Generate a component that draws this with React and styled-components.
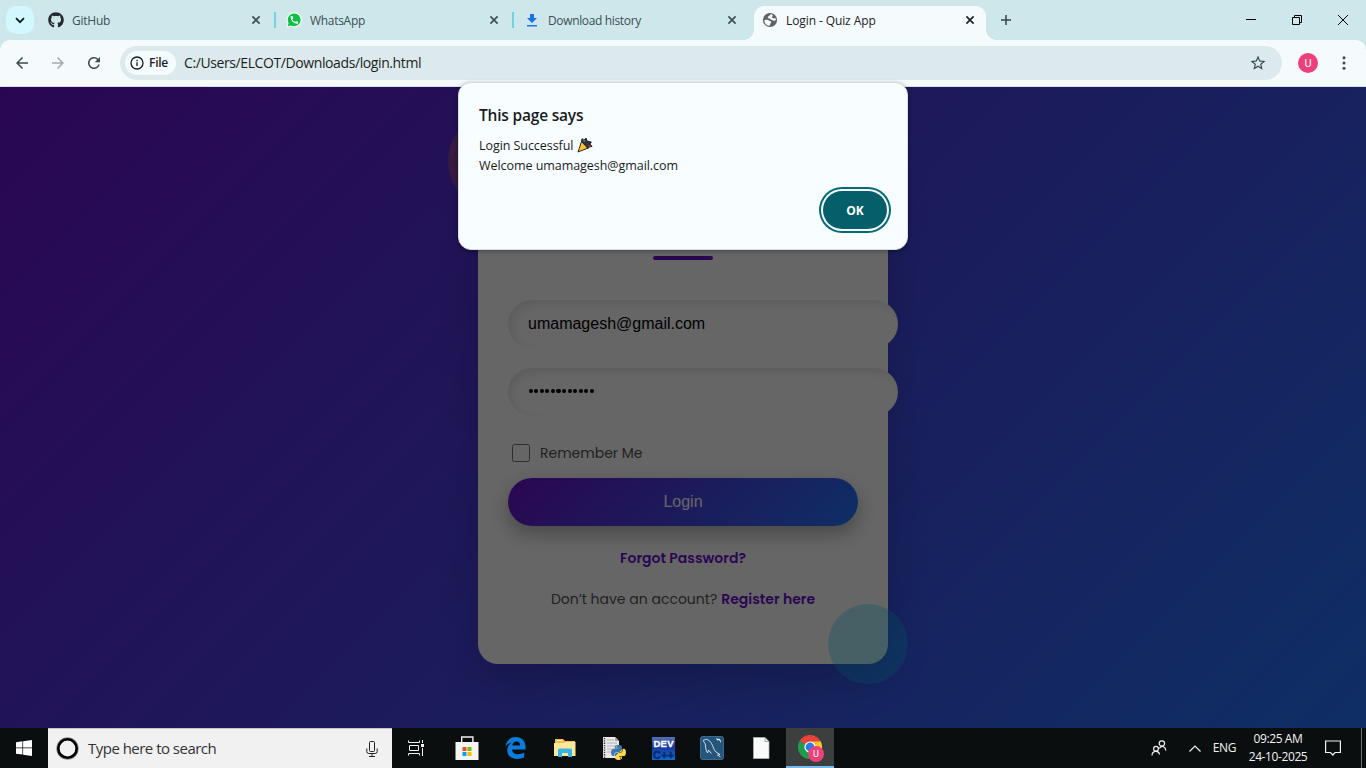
import React from "react";
import styled, { createGlobalStyle, css } from "styled-components";
import { FaGithub, FaPython } from "react-icons/fa";
import { MdStarBorder, MdRefresh, MdArrowBack, MdArrowForward, MdCall } from "react-icons/md";

const ui = '"Open Sans", "Noto Sans", sans-serif';

const GlobalStyle = createGlobalStyle`
  * { box-sizing: border-box; }
  body { margin: 0; overflow: hidden; font-family: ${ui}; }
  svg { display: block; flex: none; }
`;

const Screen = styled.div`
  position: relative;
  display: flex;
  flex-direction: column;
  width: 1366px;
  height: 768px;
  overflow: hidden;
`;

const Label = styled.span`
  font-size: ${(p) => p.$size}px;
  font-weight: ${(p) => p.$weight || 400};
  letter-spacing: ${(p) => p.$track || 0}px;
  color: ${(p) => p.$color || "inherit"};
  line-height: 1.2;
  white-space: nowrap;
`;

/* ---------- Tab strip ---------- */
const TabStrip = styled.div`
  display: flex;
  height: 40px;
  flex: none;
  background: #cee7eb;
`;
const TabSearch = styled.div`
  display: grid;
  place-items: center;
  width: 28px;
  height: 28px;
  margin: 6px 2px 0 6px;
  border-radius: 10px;
  background: #d2f7ff;
`;
const Tab = styled.div`
  position: relative;
  display: flex;
  align-items: center;
  width: ${(p) => p.$width || 238}px;
  padding: 0 13px 0 ${(p) => p.$lead}px;
  gap: ${(p) => p.$gap || 8}px;
  color: #3c4f54;
  ${(p) =>
    p.$active &&
    css`
      margin: 6px 0 0 4px;
      height: 34px;
      padding-right: 11px;
      padding-bottom: 6px;
      border-radius: 10px 10px 0 0;
      background: #f5fafd;
      color: #1d2426;
      &::before,
      &::after {
        content: "";
        position: absolute;
        bottom: 0;
        width: 10px;
        height: 10px;
      }
      &::before {
        left: -10px;
        background: radial-gradient(circle at 0 0, transparent 9.5px, #f5fafd 10px);
      }
      &::after {
        right: -10px;
        background: radial-gradient(circle at 100% 0, transparent 9.5px, #f5fafd 10px);
      }
    `}
`;
const TabTitle = styled(Label)`
  flex: 1;
  padding-top: 2px;
`;
const Divider = styled.div`
  width: 2px;
  height: 16px;
  margin-top: 12px;
  background: #72d3e4;
`;
const NewTab = styled.div`
  display: grid;
  place-items: center;
  width: 40px;
  height: 40px;
`;
const WindowButtons = styled.div`
  display: flex;
  margin-left: auto;
`;
const WindowButton = styled.div`
  display: grid;
  place-items: center;
  width: 46px;
  height: 40px;
`;

/* ---------- Toolbar ---------- */
const ToolbarBack = styled.div`
  flex: none;
  height: 47px;
  background: #cee7eb;
`;
const Toolbar = styled.div`
  display: flex;
  align-items: center;
  height: 47px;
  padding: 0 13px 0;
  border-radius: 10px 10px 0 0;
  border-bottom: 1px solid #d7e0e3;
  background: #f5fafd;
`;
const NavButton = styled.div`
  display: grid;
  place-items: center;
  width: 18px;
  height: 18px;
  margin-right: 18px;
  color: ${(p) => (p.$muted ? "#a3abae" : "#3a4a4e")};
`;
const AddressBar = styled.div`
  display: flex;
  align-items: center;
  width: 1162px;
  height: 34px;
  margin-left: -1px;
  padding: 0 15px 0 5px;
  border-radius: 17px;
  background: #dceaee;
`;
const FileChip = styled.div`
  display: flex;
  align-items: center;
  gap: 5px;
  width: 51px;
  height: 24px;
  padding-left: 5px;
  border-radius: 12px;
  margin-right: 8px;
  background: #f5fafd;
  color: #171d1e;
`;
const Address = styled(Label)`
  flex: 1;
`;
const Avatar = styled.div`
  display: grid;
  place-items: center;
  width: ${(p) => p.$size}px;
  height: ${(p) => p.$size}px;
  border-radius: 50%;
  background: #ec407a;
  color: #fff;
  font: 400 ${(p) => p.$font}px Roboto, sans-serif;
`;
const ToolbarEnd = styled.div`
  display: flex;
  align-items: center;
  gap: 24px;
  margin-left: 16px;
`;

/* ---------- Page ---------- */
const Page = styled.main`
  position: relative;
  display: flex;
  justify-content: center;
  align-items: center;
  height: 641px;
  flex: none;
  background: linear-gradient(135deg, #6a11cb, #2575fc);
`;
const Shade = styled.div`
  position: absolute;
  inset: 0;
  background: rgba(0, 0, 0, 0.6);
`;
const Card = styled.section`
  position: relative;
  display: flex;
  flex-direction: column;
  width: 410px;
  height: 513px;
  padding: 105px 30px 0;
  border-radius: 20px;
  background: #fff;
  box-shadow: 0 15px 40px rgba(0, 0, 0, 0.2);
  color: #555;
`;
const Bubble = styled.div`
  position: absolute;
  border-radius: 50%;
  ${(p) =>
    p.$warm
      ? "left: -30px; top: -40px; width: 100px; height: 100px; background: rgba(255, 126, 29, 0.3);"
      : "right: -20px; bottom: -20px; width: 80px; height: 80px; background: rgba(0, 210, 255, 0.3);"}
`;
const Underline = styled.div`
  align-self: center;
  width: 60px;
  height: 4px;
  margin-bottom: 40px;
  border-radius: 2px;
  background: #6a11cb;
`;
const Field = styled.div`
  display: flex;
  align-items: center;
  width: 390px;
  height: 48px;
  margin-bottom: 20px;
  padding: 0 20px;
  border-radius: 25px;
  background: #fff;
  box-shadow: inset 4px 4px 8px rgba(0, 0, 0, 0.1);
  font: 16px "Liberation Sans", sans-serif;
  color: #000;
`;
const Dots = styled.div`
  display: flex;
  gap: 1.4px;
  padding: 0 0 2px 0.5px;
  i {
    width: 4.2px;
    height: 4.6px;
    border-radius: 50%;
    background: #000;
  }
`;
const Remember = styled.label`
  display: flex;
  align-items: center;
  gap: 10px;
  height: 18px;
  margin: 8px 0 16px 4px;
`;
const Checkbox = styled.div`
  width: 18px;
  height: 18px;
  border: 1px solid #767676;
  border-radius: 2.5px;
`;
const LoginButton = styled.div`
  display: grid;
  place-items: center;
  height: 48px;
  flex: none;
  border-radius: 25px;
  background: linear-gradient(135deg, #6a11cb, #2575fc);
  box-shadow: 0 8px 20px rgba(0, 0, 0, 0.3);
  color: #fff;
  font: 16px "Liberation Sans", sans-serif;
`;
const CardText = styled.p`
  display: flex;
  justify-content: center;
  align-items: center;
  gap: 4px;
  height: 20px;
  margin: ${(p) => p.$top}px 0 0;
`;
const CardLabel = styled(Label)`
  font-family: Poppins, Inter, sans-serif;
`;

/* ---------- Dialog ---------- */
const Dialog = styled.div`
  position: absolute;
  left: 458px;
  top: 82px;
  display: flex;
  flex-direction: column;
  width: 450px;
  height: 168px;
  padding: 23px 20px 0;
  border: 1px solid #d5dfe2;
  border-radius: 13px;
  background: #f8fdff;
  box-shadow: 0 1px 4px rgba(0, 0, 0, 0.35);
  color: #191c1d;
`;
const DialogTitle = styled.div`
  display: flex;
  height: 29px;
`;
const DialogLine = styled.div`
  display: flex;
  align-items: center;
  gap: 4px;
  height: 20px;
`;
const OkButton = styled.div`
  display: grid;
  place-items: center;
  align-self: flex-end;
  width: 64px;
  height: 38px;
  margin: 16px 0 0;
  padding-top: 2px;
  border-radius: 19px;
  background: #045f6b;
  box-shadow: 0 0 0 2px #f8fdff, 0 0 0 4px #04697a;
  color: #fff;
`;

/* ---------- Taskbar ---------- */
const Taskbar = styled.footer`
  display: flex;
  align-items: center;
  height: 40px;
  flex: none;
  background: #0a0e0f;
  color: #f1f1f1;
`;
const TaskItem = styled.div`
  position: relative;
  display: grid;
  place-items: center;
  width: ${(p) => p.$width || 49}px;
  height: 40px;
  ${(p) => p.$active && "background: #3b403f; border-bottom: 2px solid #76b9ed;"}
`;
const SearchBox = styled.div`
  display: flex;
  align-items: center;
  width: 344px;
  height: 40px;
  padding: 0 14px 0 8px;
  border-top: 1px solid #c4c4c8;
  background: #f1f1f1;
  color: #333;
`;
const SearchText = styled(Label)`
  flex: 1;
  margin-left: 9px;
  padding-bottom: 2px;
`;
const Tray = styled.div`
  display: flex;
  align-items: center;
  height: 40px;
  margin-left: auto;
`;
const TrayPeople = styled.div`
  margin-right: 10px;
`;
const Clock = styled.div`
  display: flex;
  flex-direction: column;
  align-items: center;
  width: 68px;
  margin: 0 13px 0 8px;
  ${Label} {
    line-height: 18px;
  }
`;
const ShowDesktop = styled.div`
  width: 5px;
  height: 40px;
  margin-left: 20px;
  border-left: 1px solid #6b6e6f;
`;
const Badge = styled(Avatar)`
  position: absolute;
  left: 22px;
  top: 18px;
`;

/* ---------- Drawings ---------- */
const Close = () => (
  <svg width="10" height="10" viewBox="0 0 10 10" stroke="currentColor" strokeWidth="1.7">
    <path d="M1.4 1.4l7.2 7.2M8.6 1.4L1.4 8.6" />
  </svg>
);
const GlobeIcon = () => (
  <svg width="16" height="16" viewBox="0 0 16 16">
    <circle cx="8" cy="8" r="7.1" fill="#5f6368" />
    <path d="M2.3 8.2C4 7.5 6.2 7.7 7 8.6c.5.7 2.3.4 2.3 1.5 0 .9-.9 1-1 1.7-.1.9-.5 2-1.3 2C4.3 13.4 2.3 11 2.3 8.2z" fill="#f5fafd" />
    <path d="M9.2 2.2C7.500 2.600 8 3.900 6.600 4.200c-1.200.3-1.200 2 0 2 1.500 0 1.500 1.500 2.800 1.500 1 0 1.600 1.100 2.700 1.100.9 0 1.300-.5 1.800-.8C13.800 5.200 11.900 2.900 9.200 2.200z" fill="#f5fafd" />
    <path d="M10.2 2l.6 1.900-1.200 1.400 2.300 1.200 1.800-.5-1-2.500z" fill="#5f6368" />
  </svg>
);
const WhatsAppIcon = () => (
  <svg width="16" height="16" viewBox="0 0 16 16">
    <path d="M.4 15.6l1.2-4.1A7.6 7.6 0 1 1 4.7 14.5z" fill="#f7fffa" />
    <path d="M1.7 14.3l.9-3.3A6.4 6.4 0 1 1 5 13.4z" fill="#0cc144" />
    <g transform="translate(3.4 3.1) scale(.41)">
      <MdCall size={24} color="#fff" />
    </g>
  </svg>
);
const DownloadIcon = () => (
  <svg width="12" height="13" viewBox="0 0 12 13" fill="#1a73e8">
    <path d="M4 0h4v4h3L6 9 1 4h3zM1 11h10v1.6H1z" />
  </svg>
);
const WindowsIcon = () => (
  <svg width="16" height="16" viewBox="0 0 16 16" fill="#fff">
    <path d="M0 2.2l6.4-.9v6.2H0zM7.1 1.2L16 0v7.5H7.1zM0 8.3h6.4v6.3L0 13.7zM7.1 8.3H16V16l-8.9-1.3z" />
  </svg>
);
const MicIcon = () => (
  <svg width="12" height="18" viewBox="0 0 12 18" fill="none" stroke="#222" strokeWidth="1">
    <rect x="3.5" y="1.5" width="5" height="10" rx="1" />
    <path d="M.8 8.5v3q0 2 2 2h6.4q2 0 2-2v-3M6 13.5v3M3 16.5h6" />
  </svg>
);
const TaskViewIcon = () => (
  <svg width="18" height="16" viewBox="0 0 18 16" fill="none" stroke="#f1f1f1" strokeWidth="1">
    <path d="M.5.5v2h11v-2M1.5 5.5h9v5h-9zM.5 15.5v-2h11v2M14.5 0v3M14.5 8v8" />
    <path d="M13 4h3v3h-3z" fill="#f1f1f1" stroke="none" />
  </svg>
);
const StoreIcon = () => (
  <svg width="24" height="24" viewBox="0 0 24 24">
    <path d="M6.7 7V1h11.2v6" fill="none" stroke="#eee" strokeWidth="1.4" />
    <path d="M.5 6h23v18H.5z" fill="#f4f4f4" />
    <path d="M7.5 11h4v4h-4z" fill="#f25022" />
    <path d="M12.5 11h4v4h-4z" fill="#7fba00" />
    <path d="M7.5 16h4v4h-4z" fill="#00a4ef" />
    <path d="M12.5 16h4v4h-4z" fill="#ffb900" />
  </svg>
);
const EdgeIcon = () => (
  <svg width="22" height="22" viewBox="0 0 22 22" fill="#0a7cdb">
    <path d="M.2 9.8C1.5 3.4 5.2.1 10.8.1c6 0 9.8 4.2 9.8 10v2.4H7.1c.2 3.3 2.8 4.8 6 4.8 2.4 0 4.4-.6 6.1-1.7v4.6c-2 1.1-4.5 1.7-7.3 1.7-5.8 0-9.6-3.2-9.6-8.5 0-3.4 1.7-6.1 4.8-7.8C4.2 5.9 1.9 7.2.2 9.8zm7.2-1.2H15c0-2.6-1.2-4-3.5-4-2.4 0-3.7 1.4-4.1 4z" />
  </svg>
);
const FolderIcon = () => (
  <svg width="22" height="19" viewBox="0 0 22 19">
    <path d="M1 0h8l2 2h10v3H1z" fill="#f5bf45" />
    <path d="M3 1h5v1H3z" fill="#fff5cd" />
    <path d="M0 4h10l2-1h9.5v14H0z" fill="#ffe79a" />
    <path d="M4 18v-7q0-1.5 1.5-1.5h11Q18 9.5 18 11v7h-4v-4H8v4z" fill="#35b4ea" />
  </svg>
);
const PythonFileIcon = () => (
  <svg width="24" height="24" viewBox="0 0 24 24">
    <defs>
      <linearGradient id="snake" x1="0" y1="0" x2="1" y2="1">
        <stop offset=".5" stopColor="#3c78a8" />
        <stop offset=".5" stopColor="#ffd84a" />
      </linearGradient>
    </defs>
    <path d="M1 1h12l4 4v17H1z" fill="#e9e9e9" />
    <path d="M13 1v4h4z" fill="#a7a7a7" />
    <path d="M2.5 2v20" stroke="#3c3c3c" strokeWidth="1.5" strokeDasharray="1.3 1" />
    <path d="M5 4h7M5 7h10M5 10h10M5 13h5M5 16h4" stroke="#b0b0b0" />
    <FaPython x="8" y="8" size={17} fill="url(#snake)" />
  </svg>
);
const DevIcon = () => (
  <svg width="23" height="23" viewBox="0 0 23 23">
    <defs>
      <linearGradient id="dev" x1="0" y1="0" x2="0" y2="1">
        <stop offset="0" stopColor="#5572b5" />
        <stop offset=".45" stopColor="#183a9d" />
        <stop offset="1" stopColor="#1268ce" />
      </linearGradient>
    </defs>
    <path d="M0 0h23v23H0z" fill="url(#dev)" />
    <text x="1.5" y="10" textLength="20" fontFamily="Liberation Sans" fontWeight="700" fontSize="9.5" fill="#fff" stroke="#fff" strokeWidth=".3">DEV</text>
    <text x="1" y="21.8" textLength="21" fontFamily="Liberation Sans" fontWeight="700" fontSize="10.5" fill="#06296d" stroke="#06296d" strokeWidth=".5">C++</text>
  </svg>
);
const MySqlIcon = () => (
  <svg width="24" height="24" viewBox="0 0 24 24">
    <rect x=".5" y=".5" width="23" height="23" rx="2" fill="#25557b" stroke="#3b6a8d" />
    <path d="M3.5 4c3-1.5 6 0 8 3.5 2 3 2 6.5 4.5 8.5l4 2.5-2.5.5 3 2M3.5 4c0 2 1.5 3 2 5 0 3 .5 5 2 8l1-3 3 3.5" fill="none" stroke="#e0eaf0" strokeWidth=".9" />
    <path d="M16 2l1 2.5 2-.5 2 3-.3-2.8-1.7-1.7-1 .5z" fill="#e8f1f6" />
  </svg>
);
const FileIcon = () => (
  <svg width="17" height="22" viewBox="0 0 17 22">
    <path d="M.5.5h11.5l4 4v17H.5z" fill="#fafafa" stroke="#b7b7b7" strokeWidth=".7" />
    <path d="M12 .5v4h4" fill="none" stroke="#aaa" />
  </svg>
);
const ChromeIcon = () => (
  <svg width="24" height="24" viewBox="0 0 24 24">
    <path d="M12 12L1.6 6A12 12 0 0 1 22.4 6z" fill="#e8433a" />
    <path d="M12 12L1.6 6A12 12 0 0 0 12 24z" fill="#1e9e4c" />
    <path d="M12 12L22.4 6A12 12 0 0 1 12 24z" fill="#fcc629" />
    <path d="M12 6.5h10.6L17 9z" fill="#fcc629" />
    <circle cx="12" cy="12" r="5.6" fill="#fff" />
    <circle cx="12" cy="12" r="4.4" fill="#2b7bea" />
  </svg>
);
const PeopleIcon = () => (
  <svg width="16" height="16" viewBox="0 0 16 16" fill="none" stroke="#f1f1f1" strokeWidth="1.2">
    <circle cx="10.9" cy="3.5" r="2.7" />
    <circle cx="5" cy="8.8" r="2.4" />
    <path d="M1 15.5c.2-5.3 7-5.3 7.5-1M8.3 8.3c2.5-3.4 6.4-1.6 6.5 2.2" />
  </svg>
);
const PopperIcon = () => (
  <svg width="16" height="16" viewBox="0 0 16 16" stroke="#171717" strokeWidth=".9">
    <path d="M4.500 4.500L5 1.800l2.500 1L9 1l1 3 4.300 1-1.300 2 2 2.500-3 .5-1 1.500-2-1z" fill="#33353b" />
    <path d="M1 15L4.500 4.500l6.300 6.700z" fill="#fbc13a" />
    <path d="M6 2.500l2 2" stroke="#2a8e9c" strokeWidth="1.6" />
    <path d="M11.500 8.500l2 .5" stroke="#a83a31" strokeWidth="1.6" />
  </svg>
);

export default function App() {
  return (
    <Screen>
      <GlobalStyle />
      <TabStrip>
        <TabSearch>
          <svg width="10" height="7" viewBox="0 0 10 7" fill="none" stroke="#101c1e" strokeWidth="1.8">
            <path d="M1 1.2l4 4 4-4" />
          </svg>
        </TabSearch>
        <Tab $lead={12}>
          <FaGithub size={16} color="#24292e" />
          <TabTitle $size={12} $track={-0.25}>GitHub</TabTitle>
          <Close />
        </Tab>
        <Divider />
        <Tab $width={236} $lead={10}>
          <WhatsAppIcon />
          <TabTitle $size={12} $track={-0.3}>WhatsApp</TabTitle>
          <Close />
        </Tab>
        <Divider />
        <Tab $width={236} $lead={12} $gap={10}>
          <DownloadIcon />
          <TabTitle $size={12} $track={-0.35}>Download history</TabTitle>
          <Close />
        </Tab>
        <Tab $active $width={232} $lead={8}>
          <GlobeIcon />
          <TabTitle $size={12} $track={-0.1}>Login - Quiz App</TabTitle>
          <Close />
        </Tab>
        <NewTab>
          <svg width="10" height="10" viewBox="0 0 10 10" stroke="#33454a" strokeWidth="1.5">
            <path d="M5 0v10M0 5h10" />
          </svg>
        </NewTab>
        <WindowButtons>
          <WindowButton>
            <svg width="10" height="10" viewBox="0 0 10 10" stroke="#000"><path d="M0 4.5h10" /></svg>
          </WindowButton>
          <WindowButton>
            <svg width="10" height="10" viewBox="0 0 10 10" stroke="#000" fill="none"><path d="M.5 2.5h7v7h-7zM2.5 2.5v-2h7v7h-2" /></svg>
          </WindowButton>
          <WindowButton>
            <svg width="10" height="10" viewBox="0 0 10 10" stroke="#000"><path d="M0 0l10 10M10 0L0 10" /></svg>
          </WindowButton>
        </WindowButtons>
      </TabStrip>

      <ToolbarBack>
        <Toolbar>
          <NavButton><MdArrowBack size={18} /></NavButton>
          <NavButton $muted><MdArrowForward size={18} /></NavButton>
          <NavButton><MdRefresh size={18} /></NavButton>
          <AddressBar>
            <FileChip>
              <svg width="14" height="14" viewBox="0 0 14 14" fill="none" stroke="#171d1e" strokeWidth="1.3">
                <circle cx="7" cy="7" r="6" />
                <path d="M7 6.3v3.7M7 3.8v1.4" />
              </svg>
              <Label $size={12} $weight={600} $track={-0.25}>File</Label>
            </FileChip>
            <Address $size={14} $track={-0.4} $color="#1b1f20">C:/Users/ELCOT/Downloads/login.html</Address>
            <MdStarBorder size={18} color="#3a4a4e" />
          </AddressBar>
          <ToolbarEnd>
            <Avatar $size={20} $font={11}>U</Avatar>
            <svg width="4" height="14" viewBox="0 0 4 14" fill="#3a4a4e">
              <circle cx="2" cy="1.7" r="1.5" />
              <circle cx="2" cy="7" r="1.5" />
              <circle cx="2" cy="12.3" r="1.5" />
            </svg>
          </ToolbarEnd>
        </Toolbar>
      </ToolbarBack>

      <Page>
        <Card>
          <Bubble $warm />
          <Underline />
          <Field>umamagesh@gmail.com</Field>
          <Field>
            <Dots>{Array.from({ length: 12 }, (_, i) => <i key={i} />)}</Dots>
          </Field>
          <Remember>
            <Checkbox />
            <CardLabel $size={14}>Remember Me</CardLabel>
          </Remember>
          <LoginButton>Login</LoginButton>
          <CardText $top={22}>
            <CardLabel $size={14} $weight={600} $color="#6a11cb">Forgot Password?</CardLabel>
          </CardText>
          <CardText $top={21}>
            <CardLabel $size={14}>Don’t have an account?</CardLabel>
            <CardLabel $size={14} $weight={600} $color="#6a11cb">Register here</CardLabel>
          </CardText>
          <Bubble />
        </Card>
        <Shade />
      </Page>

      <Dialog>
        <DialogTitle><Label $size={15.5} $weight={600} $track={-0.2}>This page says</Label></DialogTitle>
        <DialogLine>
          <Label $size={12.5} $track={-0.06}>Login Successful</Label>
          <PopperIcon />
        </DialogLine>
        <DialogLine><Label $size={12.5} $track={-0.05}>Welcome umamagesh@gmail.com</Label></DialogLine>
        <OkButton><Label $size={12} $weight={700}>OK</Label></OkButton>
      </Dialog>

      <Taskbar>
        <TaskItem $width={48}><WindowsIcon /></TaskItem>
        <SearchBox>
          <svg width="23" height="23" viewBox="0 0 23 23" fill="none">
            <circle cx="11.5" cy="11.5" r="9.7" stroke="#8f8f8f" strokeWidth="3" />
            <circle cx="11.5" cy="11.5" r="9.2" stroke="#000" strokeWidth="2.6" />
          </svg>
          <SearchText $size={15} $track={-0.52}>Type here to search</SearchText>
          <MicIcon />
        </SearchBox>
        <TaskItem $width={50}><TaskViewIcon /></TaskItem>
        <TaskItem><StoreIcon /></TaskItem>
        <TaskItem $width={50}><EdgeIcon /></TaskItem>
        <TaskItem $width={48}><FolderIcon /></TaskItem>
        <TaskItem $width={50}><PythonFileIcon /></TaskItem>
        <TaskItem $width={48}><DevIcon /></TaskItem>
        <TaskItem><MySqlIcon /></TaskItem>
        <TaskItem $width={50}><FileIcon /></TaskItem>
        <TaskItem $active $width={48}>
          <ChromeIcon />
          <Badge $size={16} $font={9}>U</Badge>
        </TaskItem>
        <Tray>
          <TrayPeople><PeopleIcon /></TrayPeople>
          <TaskItem $width={36}>
            <svg width="12" height="7" viewBox="0 0 12 7" fill="none" stroke="#f1f1f1" strokeWidth="1.2"><path d="M.5 6.5L6 1l5.5 5.5" /></svg>
          </TaskItem>
          <Label $size={12} $track={-0.4}>ENG</Label>
          <Clock>
            <Label $size={12} $track={-0.4}>09:25 AM</Label>
            <Label $size={12} $track={-0.4}>24-10-2025</Label>
          </Clock>
          <svg width="16" height="16" viewBox="0 0 16 16" fill="none" stroke="#f1f1f1" strokeWidth="1.2">
            <path d="M.6 1h14.8v11.5H10L7.8 15 5.5 12.5H.6z" />
          </svg>
          <ShowDesktop />
        </Tray>
      </Taskbar>
    </Screen>
  );
}
